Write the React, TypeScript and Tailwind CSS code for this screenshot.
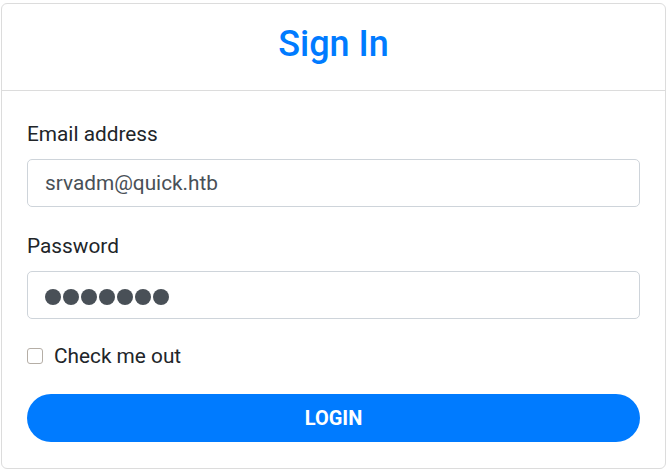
export default function App() {
  return (
    <div className="min-h-screen bg-white pt-[3px] pl-[1px] font-['Roboto',sans-serif]">
      <div className="w-[665px] rounded-[6px] border border-[#dcdcdc] bg-white">
        {/* Header */}
        <div className="flex h-[87px] items-center justify-center border-b border-[#dcdcdc]">
          <h3 className="pb-[7px] text-[36px] font-medium leading-none text-[#007bff]">Sign In</h3>
        </div>

        {/* Form */}
        <form className="px-[25px] pt-[28px] pb-[26px]" onSubmit={(e) => e.preventDefault()}>
          <div className="mb-[24px]">
            <label className="mb-[10px] block text-[20.8px] leading-[30px] text-[#212529]">Email address</label>
            <input
              type="email"
              readOnly
              value="srvadm@quick.htb"
              className="block h-[48px] w-full rounded-[5px] border border-[#ced4da] bg-white px-[17px] text-[20.8px] text-[#495057] outline-none"
            />
          </div>

          <div className="mb-[22px]">
            <label className="mb-[10px] block text-[20.8px] leading-[30px] text-[#212529]">Password</label>
            <div
              role="textbox"
              aria-label="Password"
              className="flex h-[48px] w-full items-center gap-[2px] rounded-[5px] border border-[#ced4da] bg-white px-[17px] pt-[3px]"
            >
              {Array.from({ length: 7 }).map((_, i) => (
                <span key={i} className="h-[16px] w-[16px] rounded-full bg-[#495057]" />
              ))}
            </div>
          </div>

          <label className="mb-[23px] flex h-[30px] items-center gap-[11px]">
            <span className="h-[16px] w-[16px] rounded-[3px] border border-[#b5aea6] bg-white" />
            <span className="text-[20.8px] leading-[30px] text-[#212529]">Check me out</span>
          </label>

          <button
            type="submit"
            className="flex h-[48px] w-full items-center justify-center rounded-full bg-[#007bff] text-[20px] font-bold uppercase text-white"
          >
            Login
          </button>
        </form>
      </div>
    </div>
  )
}
